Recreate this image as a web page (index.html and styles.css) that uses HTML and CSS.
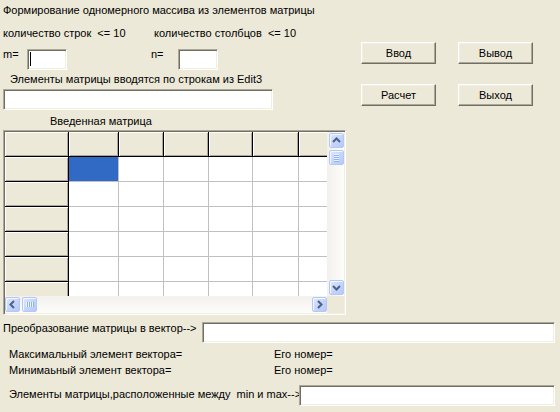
FILE: index.html
```html
<!DOCTYPE html>
<html>
<head>
<meta charset="utf-8">
<link rel="stylesheet" href="styles.css">
</head>
<body>
<div class="form">
  <div class="top">
    <div class="left">
      <div class="title">Формирование одномерного массива из элементов матрицы</div>
      <div class="counts"><span class="c1">количество строк&nbsp; &lt;= 10</span><span>количество столбцов&nbsp; &lt;= 10</span></div>
      <div class="mn">
        <span class="lbl">m=</span>
        <div class="edit edit-sm"><span class="caret"></span></div>
        <span class="lbl">n=</span>
        <div class="edit edit-sm"></div>
      </div>
      <div class="hint">Элементы матрицы вводятся по строкам из Edit3</div>
      <div class="edit edit3"></div>
      <div class="cap">Введенная матрица</div>
    </div>
    <div class="buttons">
      <button class="btn">Ввод</button>
      <button class="btn">Вывод</button>
      <button class="btn">Расчет</button>
      <button class="btn">Выход</button>
    </div>
  </div>

  <div class="grid">
    <div class="view">
      <div class="cells">
        <div class="f"></div><div class="f"></div><div class="f"></div><div class="f"></div><div class="f"></div><div class="f"></div><div class="f"></div>
        <div class="f"></div><div class="d sel"></div><div class="d"></div><div class="d"></div><div class="d"></div><div class="d"></div><div class="d"></div>
        <div class="f"></div><div class="d"></div><div class="d"></div><div class="d"></div><div class="d"></div><div class="d"></div><div class="d"></div>
        <div class="f"></div><div class="d"></div><div class="d"></div><div class="d"></div><div class="d"></div><div class="d"></div><div class="d"></div>
        <div class="f"></div><div class="d"></div><div class="d"></div><div class="d"></div><div class="d"></div><div class="d"></div><div class="d"></div>
        <div class="f"></div><div class="d"></div><div class="d"></div><div class="d"></div><div class="d"></div><div class="d"></div><div class="d"></div>
        <div class="f"></div><div class="d"></div><div class="d"></div><div class="d"></div><div class="d"></div><div class="d"></div><div class="d"></div>
      </div>
    </div>
    <div class="vbar">
      <div class="sb-btn"><svg width="15" height="15" viewBox="0 0 15 15"><polyline points="4,9 7.5,5.5 11,9" fill="none" stroke="#4D6185" stroke-width="2"/></svg></div>
      <div class="sb-btn thumb-v"><svg width="15" height="15" viewBox="0 0 15 15"><g stroke-width="1"><line x1="5" y1="4.5" x2="10" y2="4.5" stroke="#EEF4FE"/><line x1="5" y1="5.5" x2="10" y2="5.5" stroke="#8CB0F8"/><line x1="5" y1="6.5" x2="10" y2="6.5" stroke="#EEF4FE"/><line x1="5" y1="7.5" x2="10" y2="7.5" stroke="#8CB0F8"/><line x1="5" y1="8.5" x2="10" y2="8.5" stroke="#EEF4FE"/><line x1="5" y1="9.5" x2="10" y2="9.5" stroke="#8CB0F8"/><line x1="5" y1="10.5" x2="10" y2="10.5" stroke="#EEF4FE"/><line x1="5" y1="11.5" x2="10" y2="11.5" stroke="#8CB0F8"/></g></svg></div>
      <div class="sb-btn down"><svg width="15" height="15" viewBox="0 0 15 15"><polyline points="4,6 7.5,9.5 11,6" fill="none" stroke="#4D6185" stroke-width="2"/></svg></div>
    </div>
    <div class="hbar">
      <div class="sb-btn"><svg width="15" height="15" viewBox="0 0 15 15"><polyline points="9,4 5.5,7.5 9,11" fill="none" stroke="#4D6185" stroke-width="2"/></svg></div>
      <div class="sb-btn thumb-h"><svg width="15" height="15" viewBox="0 0 15 15"><g stroke-width="1"><line y1="5" x1="4.5" y2="10" x2="4.5" stroke="#EEF4FE"/><line y1="5" x1="5.5" y2="10" x2="5.5" stroke="#8CB0F8"/><line y1="5" x1="6.5" y2="10" x2="6.5" stroke="#EEF4FE"/><line y1="5" x1="7.5" y2="10" x2="7.5" stroke="#8CB0F8"/><line y1="5" x1="8.5" y2="10" x2="8.5" stroke="#EEF4FE"/><line y1="5" x1="9.5" y2="10" x2="9.5" stroke="#8CB0F8"/><line y1="5" x1="10.5" y2="10" x2="10.5" stroke="#EEF4FE"/><line y1="5" x1="11.5" y2="10" x2="11.5" stroke="#8CB0F8"/></g></svg></div>
      <div class="sb-btn right"><svg width="15" height="15" viewBox="0 0 15 15"><polyline points="6,4 9.5,7.5 6,11" fill="none" stroke="#4D6185" stroke-width="2"/></svg></div>
    </div>
    <div class="corner"></div>
  </div>

  <div class="row-conv">
    <span class="lbl">Преобразование матрицы в вектор--&gt;</span>
    <div class="edit edit-conv"></div>
  </div>
  <div class="row-info first"><span>Максимальный элемент вектора=</span><span>Его номер=</span></div>
  <div class="row-info"><span>Минимаьный элемент вектора=</span><span>Его номер=</span></div>
  <div class="row-last">
    <span class="lbl">Элементы матрицы,расположенные между&nbsp; min и max--&gt;</span>
    <div class="edit edit-last"></div>
  </div>
</div>
</body>
</html>
```

FILE: styles.css
```css
html, body {
  margin: 0;
  padding: 0;
  background: #ECE9D8;
}
body {
  width: 560px;
  height: 412px;
  overflow: hidden;
  font-family: "Liberation Sans", Arial, sans-serif;
  font-size: 11px;
  color: #000;
}
.form {
  display: flex;
  flex-direction: column;
}
.top {
  display: flex;
  align-items: flex-start;
}
.left {
  width: 350px;
  display: flex;
  flex-direction: column;
}
.title {
  margin-top: 3px;
  height: 14px;
  line-height: 14px;
  padding-left: 3px;
  white-space: nowrap;
}
.counts {
  margin-top: 9px;
  height: 14px;
  line-height: 14px;
  padding-left: 3px;
  display: flex;
  white-space: nowrap;
}
.c1 { width: 151px; }
.mn {
  margin-top: 7px;
  height: 23px;
  padding-left: 3px;
  display: grid;
  grid-template-columns: 24px 124px 27px 40px;
  align-items: start;
}
.mn .lbl {
  line-height: 14px;
}
.edit {
  box-sizing: border-box;
  height: 21px;
  background: #fff;
  border-top: 1px solid #ACA899;
  border-left: 1px solid #ACA899;
  border-bottom: 1px solid #fff;
  border-right: 1px solid #fff;
  box-shadow: inset 1px 1px 0 #716F64, inset -1px -1px 0 #F1EFE2;
  position: relative;
}
.mn .edit { margin-top: 2px; }
.edit-sm { width: 40px; }
.caret {
  position: absolute;
  left: 2px;
  top: 2px;
  width: 1px;
  height: 14px;
  background: #000;
}
.hint {
  margin-top: 2px;
  height: 14px;
  line-height: 14px;
  padding-left: 10px;
  white-space: nowrap;
}
.edit3 {
  margin-top: 3px;
  margin-left: 3px;
  width: 270px;
}
.cap {
  margin-top: 4px;
  height: 14px;
  line-height: 14px;
  padding-left: 50px;
}
.buttons {
  margin-top: 42px;
  margin-left: 11px;
  display: grid;
  grid-template-columns: 75px 75px;
  grid-auto-rows: 22px;
  column-gap: 22px;
  row-gap: 20px;
}
.btn {
  box-sizing: border-box;
  margin: 0;
  padding: 0;
  font-family: "Liberation Sans", Arial, sans-serif;
  font-size: 11px;
  color: #000;
  background: #ECE9D8;
  border-top: 1px solid #fff;
  border-left: 1px solid #fff;
  border-right: 1px solid #716F64;
  border-bottom: 1px solid #716F64;
  box-shadow: inset -1px -1px 0 #ACA899, inset 1px 1px 0 #F1EFE2;
}

/* string grid */
.grid {
  margin-top: 2px;
  margin-left: 3px;
  box-sizing: border-box;
  width: 343px;
  height: 185px;
  padding: 1px;
  border-top: 1px solid #ACA899;
  border-left: 1px solid #ACA899;
  border-bottom: 1px solid #fff;
  border-right: 1px solid #fff;
  box-shadow: inset 1px 1px 0 #716F64, inset -1px -1px 0 #F1EFE2;
  display: grid;
  grid-template-columns: 322px 17px;
  grid-template-rows: 164px 17px;
  background: #fff;
}
.view {
  overflow: hidden;
  background: #fff;
}
.cells {
  display: grid;
  width: max-content;
  grid-template-columns: 64px 50px 45px 45px 44px 46px 64px;
  grid-auto-rows: 25px;
}
.cells > div {
  box-sizing: border-box;
  border-right: 1px solid #C0C0C0;
  border-bottom: 1px solid #C0C0C0;
}
.cells > .f {
  background: #ECE9D8;
  border-right-color: #000;
  border-bottom-color: #000;
  box-shadow: inset 1px 1px 0 #fff, inset -1px -1px 0 #ACA899;
}
.cells > .d { background: #fff; }
.cells > .sel { background: #316AC5; }

.vbar {
  background: linear-gradient(to right, #F3F1EC, #FDFDFB);
  display: flex;
  flex-direction: column;
  align-items: flex-end;
}
.hbar {
  background: linear-gradient(to bottom, #F3F1EC, #FDFDFB);
  display: flex;
  align-items: center;
}
.corner { background: #ECE9D8; }
.sb-btn {
  box-sizing: border-box;
  width: 15px;
  height: 15px;
  border: 1px solid #B4C8F6;
  border-radius: 2px;
  background: linear-gradient(135deg, #E0E8FE 0%, #C6D5FC 50%, #B5C9F9 100%);
  box-shadow: inset 1px 1px 0 #F2F6FF;
  display: flex;
  align-items: center;
  justify-content: center;
  overflow: hidden;
}
.sb-btn svg { flex: none; }
.vbar .sb-btn:first-child { margin-top: 1px; }
.thumb-v { margin-top: 2px; }
.vbar .down { margin-top: auto; margin-bottom: 1px; }
.thumb-h { margin-left: 2px; }
.hbar .right { margin-left: auto; }

/* bottom rows */
.row-conv {
  margin-top: 6px;
  padding-left: 3px;
  display: grid;
  grid-template-columns: 199px 353px;
  align-items: start;
}
.row-conv .lbl, .row-last .lbl {
  line-height: 14px;
  white-space: nowrap;
}
.edit-conv { margin-top: 1px; }
.row-info {
  margin-top: 2px;
  height: 14px;
  line-height: 14px;
  padding-left: 9px;
  display: grid;
  grid-template-columns: 265px auto;
  white-space: nowrap;
}
.row-info.first { margin-top: 4px; }
.row-last {
  margin-top: 8px;
  padding-left: 9px;
  display: grid;
  grid-template-columns: 290px 256px;
  align-items: start;
}
.row-last .lbl { margin-top: 2px; }
```
